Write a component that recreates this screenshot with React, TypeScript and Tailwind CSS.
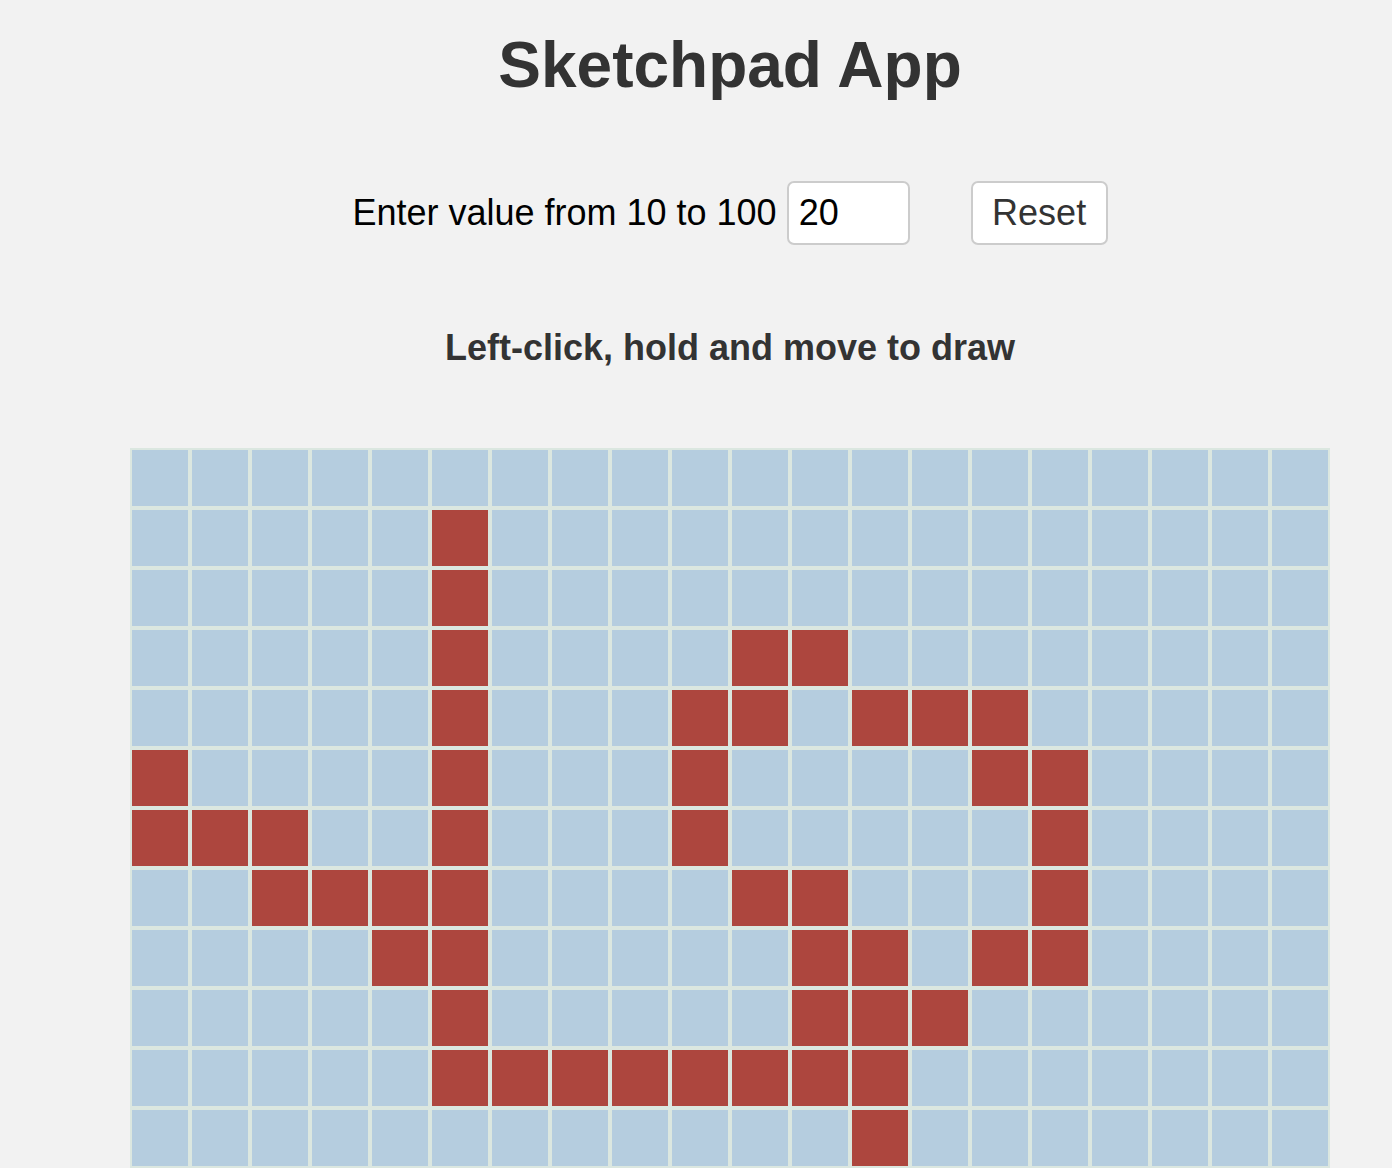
import { useState, useEffect } from "react";

const FONT = { fontFamily: "'Liberation Sans', Arial, sans-serif" };

// cells painted in the reference (col, row)
const START: [number, number][] = [
  [5, 1], [5, 2],
  [5, 3], [10, 3], [11, 3],
  [5, 4], [9, 4], [10, 4], [12, 4], [13, 4], [14, 4],
  [0, 5], [5, 5], [9, 5], [14, 5], [15, 5],
  [0, 6], [1, 6], [2, 6], [5, 6], [9, 6], [15, 6],
  [2, 7], [3, 7], [4, 7], [5, 7], [10, 7], [11, 7], [15, 7],
  [4, 8], [5, 8], [11, 8], [12, 8], [14, 8], [15, 8],
  [5, 9], [11, 9], [12, 9], [13, 9],
  [5, 10], [6, 10], [7, 10], [8, 10], [9, 10], [10, 10], [11, 10], [12, 10],
  [12, 11],
];

function initial(n: number, seed: boolean) {
  const cells = new Array(n * n).fill(false);
  if (seed) START.forEach(([c, r]) => (cells[r * n + c] = true));
  return cells;
}

export default function App() {
  const [size, setSize] = useState(20);
  const [input, setInput] = useState("20");
  const [cells, setCells] = useState<boolean[]>(() => initial(20, true));
  const [drawing, setDrawing] = useState(false);

  useEffect(() => {
    const up = () => setDrawing(false);
    window.addEventListener("mouseup", up);
    return () => window.removeEventListener("mouseup", up);
  }, []);

  function changeSize(v: string) {
    setInput(v);
    const n = parseInt(v, 10);
    if (n >= 10 && n <= 100) {
      setSize(n);
      setCells(initial(n, false));
    }
  }

  function paint(i: number) {
    setCells((prev) => {
      if (prev[i]) return prev;
      const next = prev.slice();
      next[i] = true;
      return next;
    });
  }

  return (
    <div className="min-h-screen bg-[#f2f2f2] pb-10" style={FONT}>
      <div className="ml-[130px] w-[1200px] flex flex-col items-center">
        <h1 className="pt-[33px] text-[64px] leading-[64px] font-bold text-[#333]">Sketchpad App</h1>

        <div className="mt-[84px] flex items-center h-[64px]">
          <label className="text-[36px] text-black">Enter value from 10 to 100</label>
          <input
            value={input}
            onChange={(e) => changeSize(e.target.value)}
            className="ml-[10px] w-[123px] h-[64px] px-[10px] text-[36px] text-black bg-white border-2 border-[#cccccc] rounded-[7px] outline-none"
            style={FONT}
          />
          <button
            onClick={() => setCells(initial(size, false))}
            className="ml-[61px] w-[137px] h-[64px] text-[36px] text-[#333] bg-white border-2 border-[#cccccc] rounded-[7px]"
            style={FONT}
          >
            Reset
          </button>
        </div>

        <p className="mt-[85px] text-[36px] leading-[36px] font-bold text-[#333]">Left-click, hold and move to draw</p>

        <div
          className="mt-[82px] w-[1200px] grid select-none"
          style={{ gridTemplateColumns: `repeat(${size}, 1fr)` }}
          onMouseLeave={() => setDrawing(false)}
        >
          {cells.map((on, i) => (
            <div
              key={i}
              className={`aspect-square border-2 border-[#dbe7e0] ${on ? "bg-[#ad463e]" : "bg-[#b5cddf]"}`}
              onMouseDown={(e) => {
                e.preventDefault();
                setDrawing(true);
                paint(i);
              }}
              onMouseEnter={() => drawing && paint(i)}
            />
          ))}
        </div>
      </div>
    </div>
  );
}
